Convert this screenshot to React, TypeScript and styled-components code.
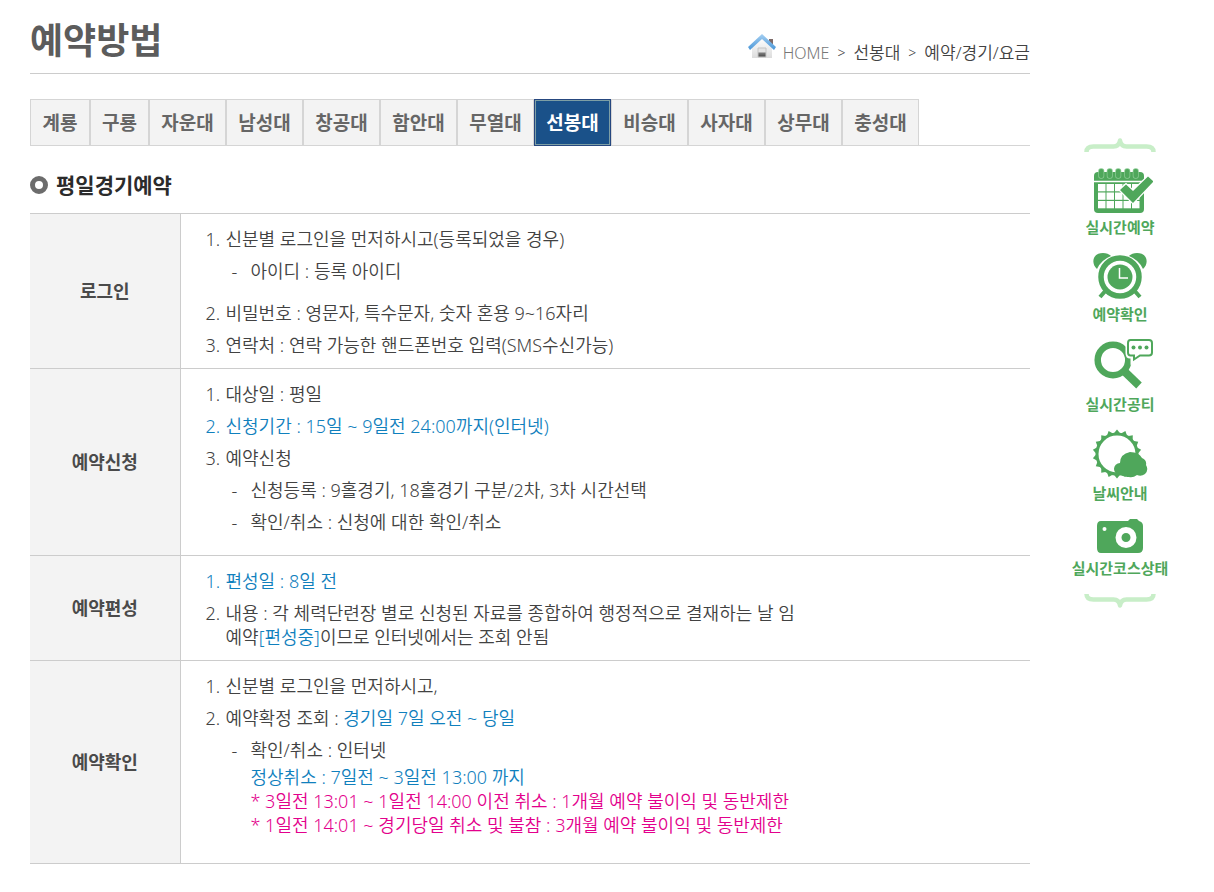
import React from "react";
import styled, { createGlobalStyle } from "styled-components";

const GlobalStyle = createGlobalStyle`
  *, *::before { box-sizing: border-box; }
  body {
    margin: 0;
    background: #fff;
    color: #424242;
    font-family: "Noto Sans", "Noto Sans CJK KR", sans-serif;
    font-size: 18px;
    font-weight: 350;
    line-height: 24px;
  }
`;

const green = "#4fa75b";
const paleGreen = "#c8eec8";

const Page = styled.div`
  display: flex;
  align-items: flex-start;
  gap: 40px;
  padding: 0 44px 0 30px;
`;

const Main = styled.main`
  flex: 1;
  max-width: 1000px;
  min-width: 0;
`;

const Header = styled.header`
  display: flex;
  justify-content: space-between;
  align-items: flex-end;
  height: 74px;
  border-bottom: 1px solid #ccc;
`;

const Title = styled.h1`
  margin: 0 0 7px;
  font-size: 36px;
  line-height: 50px;
  font-weight: 700;
  color: #5c5c5c;
`;

const Breadcrumb = styled.nav`
  display: flex;
  align-items: center;
  gap: 8px;
  margin-bottom: 8px;
  font-size: 17px;
`;

const HomeLink = styled.a`
  display: flex;
  align-items: center;
  gap: 7px;
  color: #777;
  font-size: 16px;
  text-decoration: none;
  svg { margin-top: -14px; }
`;

const Separator = styled.span`
  font-size: 14px;
`;

const Tabs = styled.ul`
  display: flex;
  margin: 25px 0 0;
  padding: 0;
  list-style: none;
  border-bottom: 1px solid #d5d5d5;
`;

const TabItem = styled.li`
  margin: 0 0 -1px;
  &:first-child > a { min-width: 60px; }
`;

const TabLink = styled.a<{ $active?: boolean; $wide?: boolean }>`
  display: block;
  min-width: ${(p) => (p.$wide ? "77px" : "59px")};
  height: 47px;
  padding: 0 11px;
  border: 1px solid ${(p) => (p.$active ? "#26477f" : "#d5d5d5")};
  box-shadow: ${(p) => (p.$active ? "inset 0 0 0 1px #7d9fa5" : "none")};
  background: ${(p) => (p.$active ? "#1a5189" : "#f3f3f3")};
  color: ${(p) => (p.$active ? "#fff" : "#666")};
  font-size: 19px;
  font-weight: 700;
  line-height: 46px;
  text-align: center;
  text-decoration: none;
`;

const SectionTitle = styled.h2`
  display: flex;
  align-items: center;
  gap: 8px;
  margin: 24px 0 13px;
  font-size: 21px;
  line-height: 30px;
  color: #2b2b2b;
  &::before {
    content: "";
    width: 18px;
    height: 18px;
    border: 5px solid #6c6c6c;
    border-radius: 50%;
  }
`;

const Table = styled.table`
  width: 100%;
  border-collapse: collapse;
`;

const Row = styled.tr`
  border-top: 1px solid #ccc;
  border-bottom: 1px solid #ccc;
`;

const RowHead = styled.th`
  width: 150px;
  padding: 0;
  background: #f3f3f3;
  border-right: 1px solid #ccc;
  font-weight: 700;
  color: #4a4a4a;
`;

const Cell = styled.td`
  padding: 9px 20px 7px 25px;
`;

const Steps = styled.ol`
  margin: 0;
  padding: 0;
  list-style: none;
`;

const Step = styled.li<{ $blue?: boolean }>`
  display: grid;
  grid-template-columns: 20px 1fr;
  padding: 4px 0;
  color: ${(p) => (p.$blue ? "#1080bd" : "inherit")};
`;

const SubSteps = styled.ul`
  margin: 0 0 10px;
  padding: 0 0 0 26px;
  list-style: none;
`;

const SubStep = styled.li`
  display: grid;
  grid-template-columns: 19px 1fr;
  padding: 4px 0;
`;

const Note = styled.span<{ $tone?: "blue" | "pink" }>`
  color: ${(p) => (p.$tone === "pink" ? "#e3008c" : "#1080bd")};
`;

const NoteBlock = styled.div`
  padding: 3px 0 5px;
`;

const QuickMenu = styled.nav`
  flex: none;
  width: 100px;
  margin-top: 138px;
  display: flex;
  flex-direction: column;
  align-items: center;
  gap: 14px;
`;

const QuickLink = styled.a`
  display: flex;
  flex-direction: column;
  align-items: center;
  gap: 3px;
  color: ${green};
  font-size: 15px;
  font-weight: 700;
  line-height: 22px;
  text-decoration: none;
  white-space: nowrap;
`;

const HouseIcon = () => (
  <svg width="28" height="25" viewBox="0 0 28 25" aria-hidden="true">
    <defs>
      <linearGradient id="wall" x1="0" y1="0" x2="0" y2="1">
        <stop offset="0" stopColor="#fff" />
        <stop offset="1" stopColor="#dcdcdc" />
      </linearGradient>
      <linearGradient id="roof" x1="0" y1="0" x2="0" y2="1">
        <stop offset="0" stopColor="#a5cff2" />
        <stop offset="1" stopColor="#4b97d8" />
      </linearGradient>
      <linearGradient id="door" x1="0" y1="0" x2="0" y2="1">
        <stop offset="0.4" stopColor="#e4e4e4" />
        <stop offset="0.6" stopColor="#777" />
        <stop offset="1" stopColor="#444" />
      </linearGradient>
    </defs>
    <path d="M21 5h4v8l-4-4z" fill="#7d6a68" />
    <path d="M4 13 14 4l10 9v11H4z" fill="url(#wall)" />
    <path d="M14 0 28 13l-2 3L14 5 2 16l-2-3z" fill="url(#roof)" />
    <path d="M10 14h8v9h-8z" fill="url(#door)" stroke="#c4c4c4" />
  </svg>
);

const Brace = ({ flip }: { flip?: boolean }) => (
  <svg width="72" height="15" viewBox="0 0 72 15" fill="none" aria-hidden="true">
    <path
      d="M2.500 14q0-5.500 7-5.500h20q5.500 0 6.500-6 1 6 6.500 6h20q7 0 7 5.500"
      transform={flip ? "matrix(1 0 0 -1 0 15)" : undefined}
      stroke={paleGreen}
      strokeWidth="4.500"
      strokeLinejoin="round"
    />
  </svg>
);

const CalendarIcon = () => (
  <svg width="66" height="46" viewBox="-7 -1 66 46" aria-hidden="true">
    <rect x="0" y="4" width="50" height="41" rx="4" fill={green} />
    <path d="M0 13.500h50" stroke="#fff" strokeWidth="1.500" />
    <g fill="#fff">
      {[4, 12.5, 21, 29.5, 38].map((x) =>
        [16, 24.5, 33].map((y) => <rect key={`${x}-${y}`} x={x} y={y} width="7.500" height="7.300" />)
      )}
    </g>
    {[7, 15.5, 24, 33, 41.5].map((x) => (
      <rect key={x} x={x - 2} y="1" width="4.500" height="9" rx="2" fill={green} stroke="#8ccb94" strokeWidth="1.500" paintOrder="stroke" />
    ))}
    <path d="m26 22 6-5.500 7 6.500L54 8.500l5.500 5L39 35z" fill={green} stroke="#fff" strokeWidth="2.500" paintOrder="stroke" />
  </svg>
);

const AlarmIcon = () => (
  <svg width="56" height="48" viewBox="0 0 56 48" aria-hidden="true">
    <path d="m15 37-7 8m33-8 7 8" stroke={green} strokeWidth="4" />
    <path d="M5 17C-1 12 0 1 11 1q5 0 8 3Q9 8 5 17zM51 17C57 12 56 1 45 1q-5 0-8 3 10 4 14 13z" fill={green} />
    <circle cx="28" cy="25" r="19" fill="#fff" stroke={green} strokeWidth="5.500" />
    <circle cx="28" cy="25" r="12.500" fill={green} />
    <path d="M27.500 16v10H36" fill="none" stroke="#fff" strokeWidth="1.500" />
  </svg>
);

const SearchIcon = () => (
  <svg width="66" height="51" viewBox="-7 1 66 51" aria-hidden="true">
    <circle cx="19" cy="22" r="15.300" fill="none" stroke={green} strokeWidth="6.500" />
    <path d="m31 34 14 13.500" stroke={green} strokeWidth="8" />
    <path
      d="M36 1h19q3 0 3 3v11q0 3-3 3H46l-7 4.500V18h-3q-2 0-2-3V4q0-3 2-3z"
      fill="#fff"
      stroke="#fff"
      strokeWidth="5"
    />
    <path
      d="M36.500 2H55q3 0 3 3V14.500q0 3-3 3h-9l-6 4v-4h-3.500q-2.500 0-2.500-3V5q0-3 2.500-3z"
      fill="#fff"
      stroke={green}
      strokeWidth="2"
    />
    <g fill={green}>
      <circle cx="39.500" cy="9.500" r="2" />
      <circle cx="46" cy="9.500" r="2" />
      <circle cx="52.500" cy="9.500" r="2" />
    </g>
  </svg>
);

const SunIcon = () => (
  <svg width="56" height="50" viewBox="0 0 56 50" aria-hidden="true">
    <g fill={green}>
      {Array.from({ length: 18 }, (_, i) => (
        <path key={i} d="M20.500 6 25 .5l4.500 5.500z" transform={`rotate(${i * 20} 25 25)`} />
      ))}
    </g>
    <circle cx="25" cy="25" r="20" fill="#fff" stroke={green} strokeWidth="3" />
    <path
      d="M28 46a6 6 0 0 1 0-12q0-9 10-11 9 0 12 6 5 2 4 7 3 5-1 9-4 3-8 1-4 3-8 2-3 0-9-2z"
      fill={green}
    />
  </svg>
);

const CameraIcon = () => (
  <svg width="48" height="36" viewBox="0 -1 48 36" aria-hidden="true">
    <path d="M5 2h27l2-2h7l2 2q4 1 4 5v22q0 5-5 5H5q-4 0-4-5V7q0-5 4-5z" fill={green} />
    <circle cx="8.500" cy="10" r="2" fill="#fff" />
    <circle cx="30" cy="18.500" r="7.500" fill={green} stroke="#fff" strokeWidth="6" />
  </svg>
);

const branches = ["계룡", "구룡", "자운대", "남성대", "창공대", "함안대", "무열대", "선봉대", "비승대", "사자대", "상무대", "충성대"];

const quickLinks = [
  { label: "실시간예약", Icon: CalendarIcon },
  { label: "예약확인", Icon: AlarmIcon },
  { label: "실시간공티", Icon: SearchIcon },
  { label: "날씨안내", Icon: SunIcon },
  { label: "실시간코스상태", Icon: CameraIcon },
];

export default function App() {
  return (
    <>
      <GlobalStyle />
      <Page>
        <Main>
          <Header>
            <Title>예약방법</Title>
            <Breadcrumb aria-label="현재 위치">
              <HomeLink href="#"><HouseIcon />HOME</HomeLink>
              <Separator>&gt;</Separator>
              <span>선봉대</span>
              <Separator>&gt;</Separator>
              <span>예약/경기/요금</span>
            </Breadcrumb>
          </Header>
          <Tabs>
            {branches.map((name) => (
              <TabItem key={name}>
                <TabLink href="#" $active={name === "선봉대"} $wide={name.length > 2}>{name}</TabLink>
              </TabItem>
            ))}
          </Tabs>
          <SectionTitle>평일경기예약</SectionTitle>
          <Table>
            <tbody>
              <Row>
                <RowHead scope="row">로그인</RowHead>
                <Cell>
                  <Steps>
                    <Step><span>1.</span><span>신분별 로그인을 먼저하시고(등록되었을 경우)</span></Step>
                    <li>
                      <SubSteps>
                        <SubStep><span>-</span><span>아이디 : 등록 아이디</span></SubStep>
                      </SubSteps>
                    </li>
                    <Step><span>2.</span><span>비밀번호 : 영문자, 특수문자, 숫자 혼용 9~16자리</span></Step>
                    <Step><span>3.</span><span>연락처 : 연락 가능한 핸드폰번호 입력(SMS수신가능)</span></Step>
                  </Steps>
                </Cell>
              </Row>
              <Row>
                <RowHead scope="row">예약신청</RowHead>
                <Cell>
                  <Steps>
                    <Step><span>1.</span><span>대상일 : 평일</span></Step>
                    <Step $blue><span>2.</span><span>신청기간 : 15일 ~ 9일전 24:00까지(인터넷)</span></Step>
                    <Step><span>3.</span><span>예약신청</span></Step>
                    <li>
                      <SubSteps>
                        <SubStep><span>-</span><span>신청등록 : 9홀경기, 18홀경기 구분/2차, 3차 시간선택</span></SubStep>
                        <SubStep><span>-</span><span>확인/취소 : 신청에 대한 확인/취소</span></SubStep>
                      </SubSteps>
                    </li>
                  </Steps>
                </Cell>
              </Row>
              <Row>
                <RowHead scope="row">예약편성</RowHead>
                <Cell>
                  <Steps>
                    <Step $blue><span>1.</span><span>편성일 : 8일 전</span></Step>
                    <Step>
                      <span>2.</span>
                      <span>
                        내용 : 각 체력단련장 별로 신청된 자료를 종합하여 행정적으로 결재하는 날 임<br />
                        예약<Note>[편성중]</Note>이므로 인터넷에서는 조회 안됨
                      </span>
                    </Step>
                  </Steps>
                </Cell>
              </Row>
              <Row>
                <RowHead scope="row">예약확인</RowHead>
                <Cell>
                  <Steps>
                    <Step><span>1.</span><span>신분별 로그인을 먼저하시고,</span></Step>
                    <Step><span>2.</span><span>예약확정 조회 : <Note>경기일 7일 오전 ~ 당일</Note></span></Step>
                    <li>
                      <SubSteps>
                        <SubStep>
                          <span>-</span>
                          <div>
                            확인/취소 : 인터넷
                            <NoteBlock>
                              <Note>정상취소 : 7일전 ~ 3일전 13:00 까지</Note><br />
                              <Note $tone="pink">* 3일전 13:01 ~ 1일전 14:00 이전 취소 : 1개월 예약 불이익 및 동반제한</Note><br />
                              <Note $tone="pink">* 1일전 14:01 ~ 경기당일 취소 및 불참 : 3개월 예약 불이익 및 동반제한</Note>
                            </NoteBlock>
                          </div>
                        </SubStep>
                      </SubSteps>
                    </li>
                  </Steps>
                </Cell>
              </Row>
            </tbody>
          </Table>
        </Main>
        <QuickMenu aria-label="빠른 메뉴">
          <Brace />
          {quickLinks.map(({ label, Icon }) => (
            <QuickLink href="#" key={label}><Icon />{label}</QuickLink>
          ))}
          <Brace flip />
        </QuickMenu>
      </Page>
    </>
  );
}
